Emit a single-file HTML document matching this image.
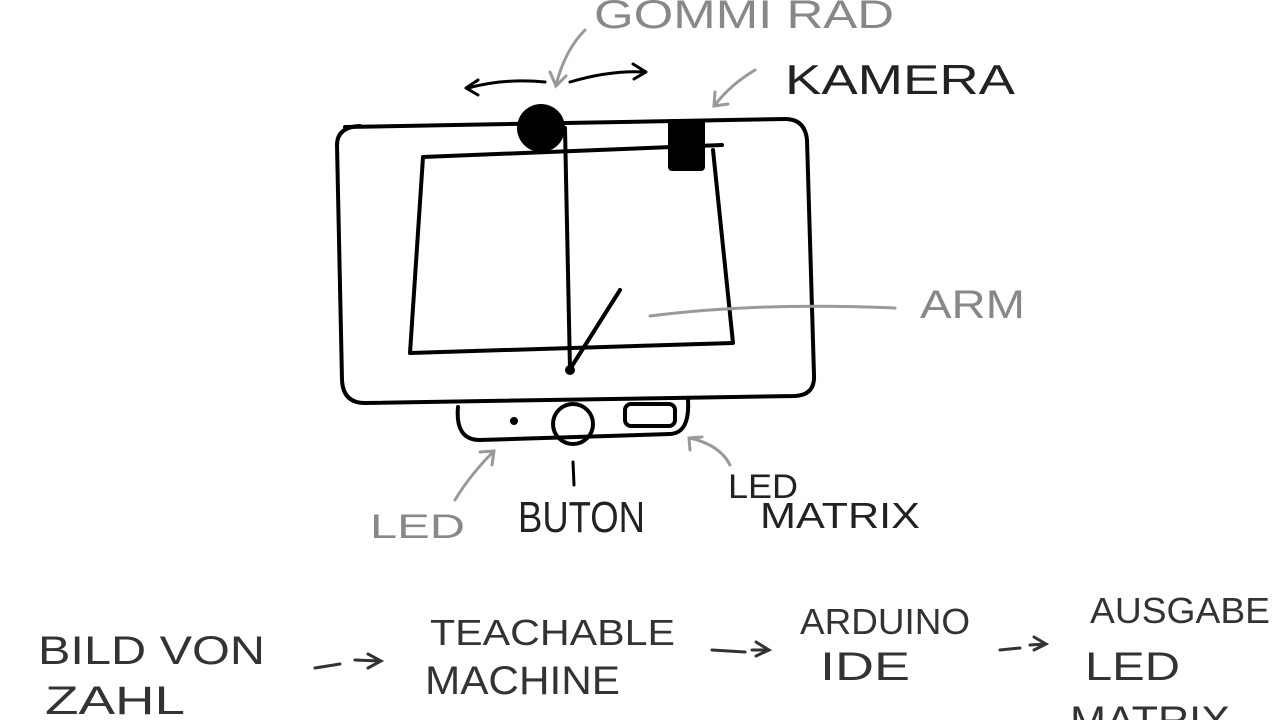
<!DOCTYPE html>
<html><head><meta charset="utf-8"><style>
html,body{margin:0;padding:0;background:#fff;width:1280px;height:720px;overflow:hidden}
svg{display:block}
text{font-family:"Liberation Sans",sans-serif;font-weight:normal}
</style></head><body>
<svg width="1280" height="720" viewBox="0 0 1280 720" xmlns="http://www.w3.org/2000/svg">
<g fill="none" stroke="#000" stroke-width="4" stroke-linecap="round" stroke-linejoin="round">
<!-- outer body -->
<path d="M345 127 L785 119 Q805 119 807 140 L814 375 Q815 395 795 396 L365 403 Q343 403 342 380 L337 145 Q337 127 360 126"/>
<!-- inner screen -->
<path d="M423 157 L722 145 M423 157 L410 353 L733 343 L713 150"/>
<!-- vertical line -->
<path d="M565 128 L570 370"/>
<!-- arm -->
<path d="M572 366 L620 290"/>
<!-- bottom box -->
<path d="M458 407 Q455 440 480 440 L670 434 Q690 433 688 400"/>
<circle cx="573" cy="424" r="20"/>
<rect x="625" y="404" width="50" height="22" rx="6"/>
<!-- button line -->
<path d="M573 462 L574 485" stroke-width="3"/>
<!-- rotation arrows -->
<path d="M545 82 Q505 78 468 88 M478 80 L466 88 L478 95" stroke-width="3"/>
<path d="M570 82 Q610 70 645 72 M633 64 L646 72 L634 79" stroke-width="3"/>
</g>
<circle cx="541" cy="128" r="24" fill="#000"/>
<rect x="668" y="119" width="37" height="52" rx="4" fill="#000"/>
<circle cx="570" cy="370" r="5" fill="#000"/>
<circle cx="514" cy="421" r="4" fill="#000"/>
<g fill="none" stroke="#999" stroke-width="3" stroke-linecap="round">
<path d="M585 30 Q565 50 556 85 M550 72 L556 86 L566 76"/>
<path d="M755 70 Q730 85 715 105 M715 92 L714 106 L728 104"/>
<path d="M895 308 Q760 302 650 316"/>
<path d="M493 452 Q470 475 455 500 M480 452 L494 451 L492 465"/>
<path d="M690 438 Q720 445 730 465 M690 450 L689 438 L702 437"/>
</g>
<g fill="none" stroke="#333" stroke-width="3" stroke-linecap="round">
<path d="M315 668 L340 664 M355 660 L380 661 M368 654 L381 661 L368 668"/>
<path d="M712 650 L745 652 M752 650 L768 650 M756 642 L769 650 L756 656"/>
<path d="M1000 650 L1020 648 M1030 645 L1045 644 M1034 637 L1046 644 L1034 650"/>
</g>
<g fill="#888" font-size="40">
<text x="594" y="28" textLength="300" lengthAdjust="spacingAndGlyphs">GOMMI RAD</text>
<text x="920" y="318" textLength="105" lengthAdjust="spacingAndGlyphs">ARM</text>
<text x="370" y="538" font-size="34" textLength="95" lengthAdjust="spacingAndGlyphs">LED</text>
</g>
<g fill="#222" font-size="42">
<text x="785" y="94" textLength="230" lengthAdjust="spacingAndGlyphs">KAMERA</text>
<text x="518" y="532" font-size="44" textLength="127" lengthAdjust="spacingAndGlyphs">BUTON</text>
<text x="728" y="498" font-size="34" textLength="70" lengthAdjust="spacingAndGlyphs">LED</text>
<text x="760" y="528" font-size="36" textLength="160" lengthAdjust="spacingAndGlyphs">MATRIX</text>
</g>
<g fill="#333" font-size="40">
<text x="38" y="664" textLength="227" lengthAdjust="spacingAndGlyphs">BILD VON</text>
<text x="45" y="714" textLength="140" lengthAdjust="spacingAndGlyphs">ZAHL</text>
<text x="430" y="645" font-size="36" textLength="245" lengthAdjust="spacingAndGlyphs">TEACHABLE</text>
<text x="425" y="694" textLength="195" lengthAdjust="spacingAndGlyphs">MACHINE</text>
<text x="800" y="634" font-size="36" textLength="170" lengthAdjust="spacingAndGlyphs">ARDUINO</text>
<text x="820" y="680" textLength="90" lengthAdjust="spacingAndGlyphs">IDE</text>
<text x="1090" y="623" font-size="36" textLength="180" lengthAdjust="spacingAndGlyphs">AUSGABE</text>
<text x="1085" y="680" textLength="95" lengthAdjust="spacingAndGlyphs">LED</text>
<text x="1070" y="734" textLength="160" lengthAdjust="spacingAndGlyphs">MATRIX</text>
</g>
</svg>
</body></html>
